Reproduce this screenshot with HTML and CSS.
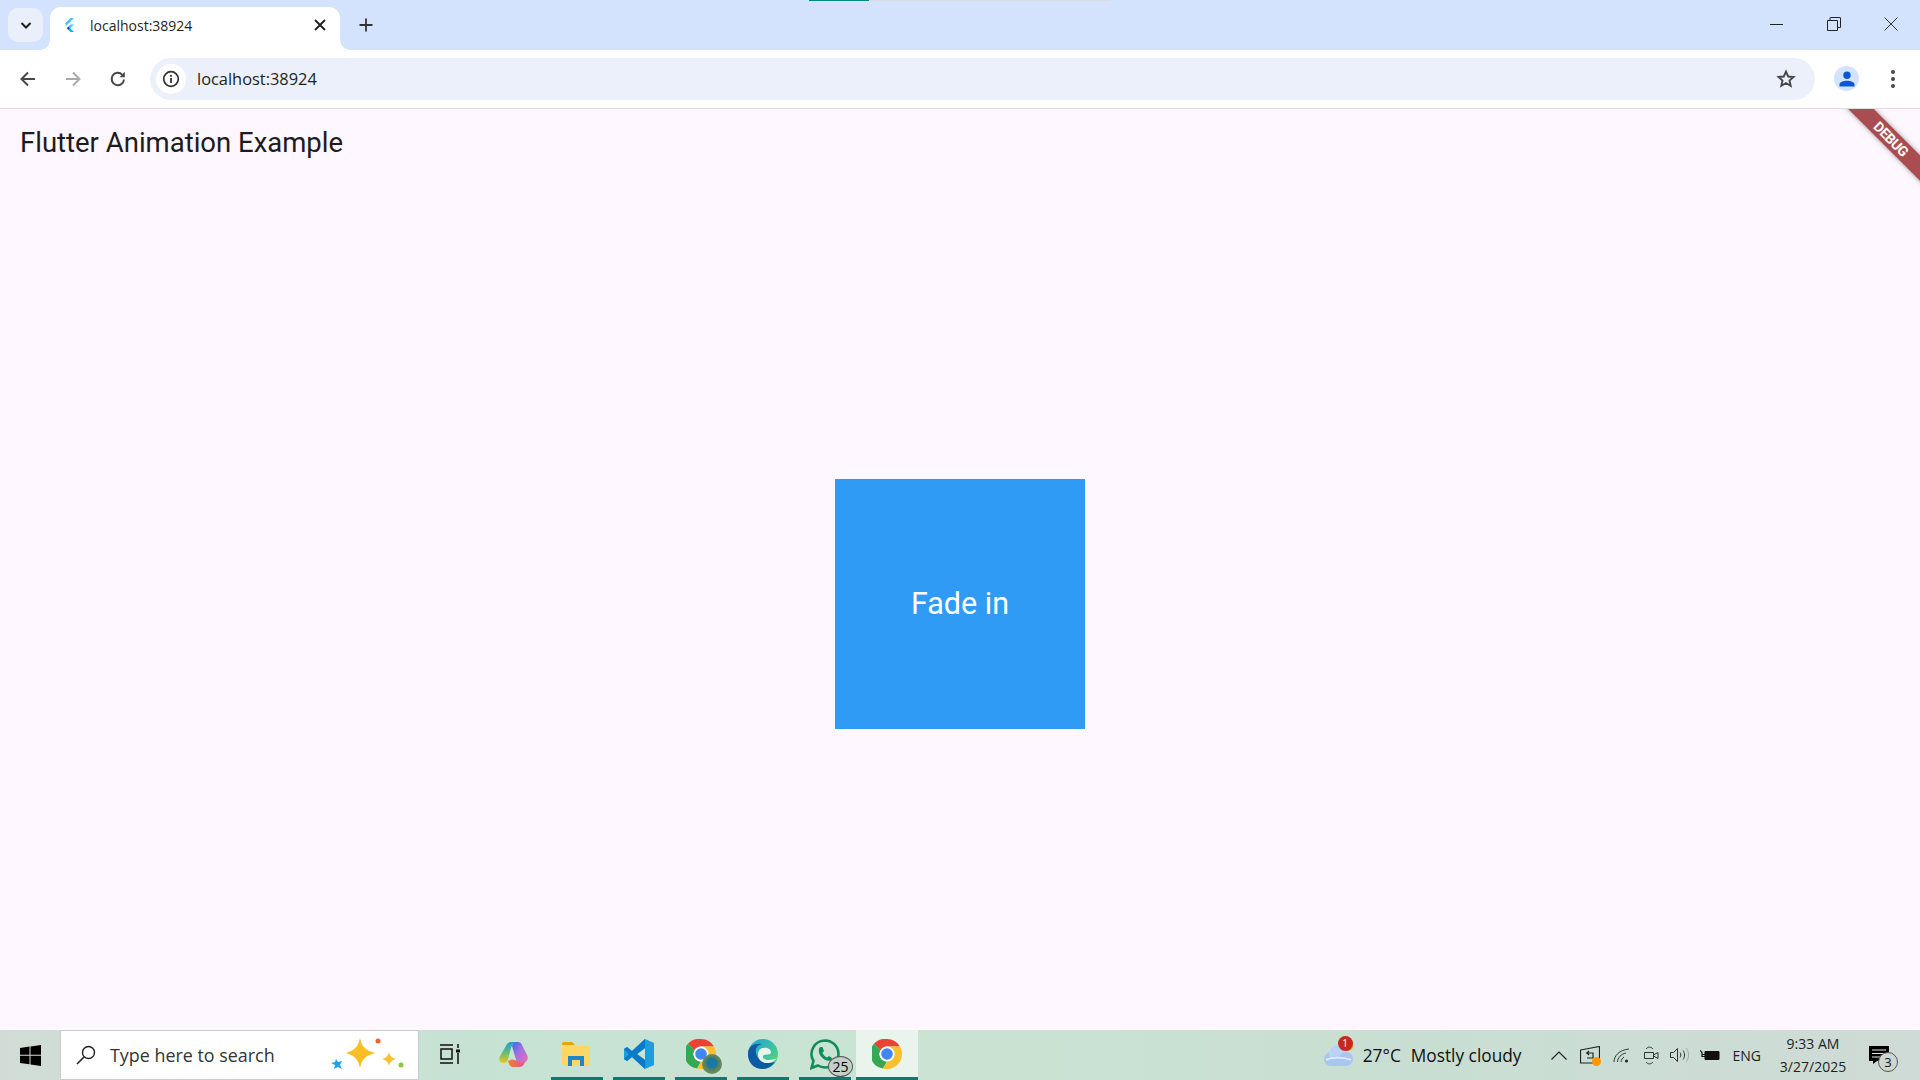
FILE: index.html
```html
<!DOCTYPE html>
<html>
<head>
<meta charset="UTF-8">
<title>localhost:38924</title>
<link rel="stylesheet" href="styles.css">
</head>
<body>
<div class="screen">

<div class="tabstrip">
    <div class="loadbar"><span class="loaddone"></span><span class="loadrest"></span></div>
    <div class="tabsearch">
        <svg width="16" height="16" viewBox="0 0 16 16"><path d="M3.500 6 8 10.500 12.500 6" fill="none" stroke="#1f1f1f" stroke-width="2"/></svg>
    </div>
    <div class="tab">
        <svg class="favicon" width="16" height="16" viewBox="0 0 16 16"><path d="M9.500 1 13 1 5.500 8.500 3.800 6.800Z" fill="#47c5fb"/><path d="M9.500 7.500 13 7.500 9.200 11.300 7.400 9.600Z" fill="#47c5fb"/><path d="M7.400 13 5.700 11.300 7.400 9.600 9.200 11.300Z" fill="#00569e"/><path d="M7.400 13 9.200 11.300 13 15 9.500 15Z" fill="#00b5f8"/></svg>
        <span class="tabtitle">localhost:38924</span>
        <svg class="tabclose" width="16" height="16" viewBox="0 0 16 16"><path d="M3 3 13 13M13 3 3 13" stroke="#1f1f1f" stroke-width="1.800"/></svg>
    </div>
    <svg class="newtab" width="16" height="16" viewBox="0 0 16 16"><path d="M8 1.500V14.500M1.500 8H14.500" stroke="#333" stroke-width="1.800"/></svg>
    <div class="winbtns">
        <svg width="14" height="14" viewBox="0 0 14 14"><path d="M0 7.500H13" stroke="#222" stroke-width="1"/></svg>
        <svg width="14" height="14" viewBox="0 0 14 14"><path d="M.5 3.500H10.500V13.500H.5ZM3 3.500V1A.5.5 0 0 1 3.500.5H13A.5.5 0 0 1 13.500 1V10.500H10.500" fill="none" stroke="#222" stroke-width="1"/></svg>
        <svg width="14" height="14" viewBox="0 0 14 14"><path d="M.5.500 13.500 13.500M13.500.5.500 13.500" stroke="#333" stroke-width="1"/></svg>
    </div>
</div>

<div class="toolbar">
    <svg class="navicon" width="20" height="20" viewBox="0 0 20 20"><path d="M17 10H4M10 3.500 3.500 10 10 16.500" fill="none" stroke="#474747" stroke-width="2"/></svg>
    <svg class="navicon" width="20" height="20" viewBox="0 0 20 20"><path d="M3 10H16M10 3.500 16.500 10 10 16.500" fill="none" stroke="#aaa" stroke-width="2"/></svg>
    <svg class="navicon" width="20" height="20" viewBox="0 0 20 20"><path d="M16 10.500A6.200 6.200 0 1 1 14.200 5.600" fill="none" stroke="#474747" stroke-width="2"/><path d="M16.800 2.800V8.200H11.400Z" fill="#474747"/></svg>
    <div class="omnibox">
        <div class="siteinfo">
            <svg width="18" height="18" viewBox="0 0 18 18"><circle cx="9" cy="9" r="7.300" fill="none" stroke="#333" stroke-width="1.700"/><path d="M9 8V13M9 5V6.700" stroke="#333" stroke-width="1.800"/></svg>
        </div>
        <span class="url">localhost:38924</span>
        <svg class="star" width="20" height="20" viewBox="0 0 20 20"><path d="M10 2.600 12.200 7.500 17.500 8 13.500 11.500 14.700 16.800 10 14 5.300 16.800 6.500 11.500 2.500 8 7.800 7.500Z" fill="none" stroke="#474747" stroke-width="1.900"/></svg>
    </div>
    <div class="avatar">
        <svg width="16" height="16" viewBox="0 0 16 16"><circle cx="8" cy="4.300" r="3.700" fill="#0b57d0"/><path d="M.5 15.500V13.500C.5 10.800 4.500 9.700 8 9.700S15.500 10.800 15.500 13.500V15.500Z" fill="#0b57d0"/></svg>
    </div>
    <div class="kebab"><i></i><i></i><i></i></div>
</div>

<div class="page">
    <div class="appbar">Flutter Animation Example</div>
    <div class="stage">
        <div class="fadebox">Fade in</div>
    </div>
    <div class="ribbon">DEBUG</div>
</div>

<div class="taskbar">
    <div class="startbtn">
        <svg width="21" height="21" viewBox="0 0 21 21"><path d="M0 3 9.500 1.500V9.800H0ZM10.500 1.400 21 0V9.800H10.500ZM0 10.800H9.500V19.200L0 18ZM10.500 10.800H21V21L10.500 19.400Z" fill="#000"/></svg>
    </div>
    <div class="searchbox">
        <svg class="searchicon" width="20" height="20" viewBox="0 0 20 20"><circle cx="12.500" cy="7.500" r="6" fill="none" stroke="#222" stroke-width="1.400"/><path d="M8 12 1 19" stroke="#222" stroke-width="1.600"/></svg>
        <span class="searchtext">Type here to search</span>
        <svg class="sparkles" width="80" height="34" viewBox="0 0 80 34"><path d="M30 0C32 9 35 12 45 15 35 18 32 21 30 30 28 21 25 18 16 15 25 12 28 9 30 0Z" fill="#fbbd24"/><path d="M59 14C60 18 62 20 66 21 62 22 60 24 59 28 58 24 56 22 52 21 56 20 58 18 59 14Z" fill="#fbc02d"/><path d="M6 21 8 24 12 23 10 27 12 31 8 29 4 31 5 27 1 25 5 24Z" fill="#1fa5f0"/><circle cx="48" cy="3" r="2.500" fill="#f4612a"/><circle cx="71" cy="27" r="2.500" fill="#8cc63f"/></svg>
    </div>
    <div class="taskslot">
        <svg class="taskview" width="21" height="20" viewBox="0 0 21 20"><path d="M1 1H14M1 19H14M2 5H13V15H2ZM19 0V4M19 9V20" fill="none" stroke="#111" stroke-width="1.500"/><rect x="17" y="5.500" width="4" height="3" fill="#111"/></svg>
    </div>
    <div class="taskslot">
        <svg class="copilot" width="29" height="25" viewBox="0 0 29 25"><defs><linearGradient id="cpa" x1="0" y1="0" x2="1" y2="1"><stop offset="0" stop-color="#2a6fdc"/><stop offset=".45" stop-color="#a36fe0"/><stop offset="1" stop-color="#ee6fb0"/></linearGradient><linearGradient id="cpb" x1="0" y1="0" x2="0" y2="1"><stop offset="0" stop-color="#1c9cd8"/><stop offset=".55" stop-color="#6cc070"/><stop offset="1" stop-color="#f5c518"/></linearGradient><linearGradient id="cpc" x1="0" y1="0" x2="1" y2="0"><stop offset="0" stop-color="#f08030"/><stop offset="1" stop-color="#e8508a"/></linearGradient></defs><path d="M15 0H19C21 0 22.500 1 23 3L28.500 14C29.500 18 27 21 23 21H18L13 4Z" fill="url(#cpa)"/><path d="M8 2C9 .5 11 0 13 0H17C14 1 13 3 12 6L9 17C8.500 20 7 21 4 21 1 21-.5 18 .5 15Z" fill="url(#cpb)"/><path d="M9 19C10 21 10.500 25 14 25H20C23 25 25 23 26 20 23 21 21 21 18 19 15 17 12 17 9 19Z" fill="url(#cpc)"/></svg>
    </div>
    <div class="taskslot running">
        <svg class="explorer" width="28" height="24" viewBox="0 0 28 24"><path d="M0 2A2 2 0 0 1 2 0H10L13 3H0Z" fill="#e0a800"/><path d="M0 4H26A2 2 0 0 1 28 6V22A2 2 0 0 1 26 24H2A2 2 0 0 1 0 22Z" fill="#fdd766"/><path d="M6 14H22V24H18V18H10V24H6Z" fill="#1f86c9"/></svg>
    </div>
    <div class="taskslot running">
        <svg width="30" height="30" viewBox="0 0 30 30"><path d="M21 0 30 4V26L21 30 8 18 3 22 0 20V10L3 8 8 12ZM21 9 13 15 21 21Z" fill="#1b9de2"/><path d="M21 0V9L13 15 21 21V30L8 18 3 22 0 20 5 15 0 10 3 8 8 12Z" fill="#0a7bc6"/></svg>
    </div>
    <div class="taskslot running">
        <div class="iconwrap">
            <svg width="30" height="30" viewBox="0 0 30 30"><use href="#chromelogo"/></svg>
            <div class="photobadge"></div>
        </div>
    </div>
    <div class="taskslot running">
        <svg width="30" height="30" viewBox="0 0 30 30"><defs><linearGradient id="edgea" x1="0" y1="0" x2="1" y2="1"><stop offset="0" stop-color="#1aa0dc"/><stop offset="1" stop-color="#5fdc70"/></linearGradient></defs><circle cx="15" cy="15" r="15" fill="url(#edgea)"/><path d="M0 15C0 6 8 4 14 5 9 6 7 10 8 14 9 20 15 24 22 24L27 23C24 27 20 30 15 30 6 30 0 24 0 15Z" fill="#0c59a4"/><path d="M10 15C10 10 15 8 19 9 23 10 24 14 22 15 19 16 16 15 15 17 14 20 18 21 22 21L27 20 29 19C26 23 22 24 19 24 13 24 10 20 10 15Z" fill="#e8f5ee"/></svg>
    </div>
    <div class="taskslot running">
        <div class="iconwrap">
            <svg width="30" height="31" viewBox="0 0 30 31"><path d="M15 1.500A13.500 13.500 0 0 1 15 28.500 14 14 0 0 1 8 26.500L1.500 29 3.500 22A13.500 13.500 0 0 1 15 1.500Z" fill="none" stroke="#128c5a" stroke-width="2.600"/><path d="M10 8 12.500 8 14 12 12.500 14C13.500 16 15 17.500 17 18.500L19 17 22 19 21.500 21C19 23 14 21 11.500 18 8.500 15 8 10 10 8Z" fill="#128c5a"/></svg>
            <div class="countbadge">25</div>
        </div>
    </div>
    <div class="taskslot active">
        <svg width="30" height="30" viewBox="0 0 30 30"><g id="chromelogo"><path d="M15 0A15 15 0 0 1 28 7.500H15A7.500 7.500 0 0 0 8.500 11.200L2 4.800A15 15 0 0 1 15 0Z" fill="#ea4335"/><path d="M2 4.800 8.500 11.200A7.500 7.500 0 0 0 15 22.500L11 29.500A15 15 0 0 1 2 4.800Z" fill="#34a853"/><path d="M28 7.500A15 15 0 0 1 11 29.500L15 22.500A7.500 7.500 0 0 0 21.500 11.200L15 7.500Z" fill="#fbc02d"/><circle cx="15" cy="15" r="7.500" fill="#fff"/><circle cx="15" cy="15" r="5.800" fill="#4285f4"/></g></svg>
    </div>
    <div class="tray">
        <div class="weather">
            <div class="iconwrap">
                <svg width="30" height="21" viewBox="0 0 30 21"><circle cx="8" cy="14" r="7" fill="#a9c6f2"/><circle cx="15" cy="9" r="9" fill="#bcd2f5"/><circle cx="23" cy="14" r="7" fill="#a9c6f2"/><rect x="8" y="13" width="15" height="8" fill="#a9c6f2"/><path d="M3 15C9 12 21 12 28 15" fill="none" stroke="#e5efff" stroke-width="1.500"/></svg>
                <div class="sunbit"></div>
                <div class="alertbadge">1</div>
            </div>
            <span>27°C</span>
            <span>Mostly cloudy</span>
        </div>
        <svg class="trayicon" width="16" height="9" viewBox="0 0 16 9"><path d="M.5 8.500 8 1 15.500 8.500" fill="none" stroke="#222" stroke-width="1.200"/></svg>
        <div class="iconwrap trayicon">
            <svg width="20" height="18" viewBox="0 0 20 18"><path d="M.5 4 19.500.5V17H.5ZM6 7H13V12H7M9 5 7 7 9 9" fill="none" stroke="#222" stroke-width="1.200"/></svg>
            <div class="updatedot"></div>
        </div>
        <svg class="trayicon wifi" width="17" height="15" viewBox="0 0 17 15"><path d="M1 14C1 8 6 2 16 1M4.500 14C4.500 10 8 6 13 5M8 14C8 12 9.500 10 11 9" fill="none" stroke="#333" stroke-width="1"/><circle cx="13.500" cy="13" r="1.500" fill="#222"/></svg>
        <svg class="trayicon meet" width="15" height="19" viewBox="0 0 15 19"><path d="M.5 6.500H9.500V12.500H.5ZM9.500 9 14 6.500V12.500L9.500 10M2 3C4 .5 7 .5 9 3M2 16C4 18.500 7 18.500 9 16" fill="none" stroke="#333" stroke-width="1"/></svg>
        <svg class="trayicon volume" width="20" height="16" viewBox="0 0 20 16"><path d="M.5 5.500H3.500L7.500 1.500V14.500L3.500 10.500H.5ZM10 5.500C11 7 11 9 10 10.500M13 3.500C15 6 15 10 13 12.500" fill="none" stroke="#333" stroke-width="1"/><path d="M16 1C19.500 5 19.500 11 16 15" fill="none" stroke="#aaa" stroke-width="1"/></svg>
        <svg width="20" height="12" viewBox="0 0 20 12"><path d="M5 2.500H19V10.500H5Z" fill="#111" stroke="#111"/><path d="M0 1.500 2 3.500V7.500H5M2 5.500H5" fill="none" stroke="#111" stroke-width="1.200"/></svg>
        <span class="lang">ENG</span>
        <div class="clock"><span>9:33 AM</span><span>3/27/2025</span></div>
        <div class="iconwrap">
            <svg width="21" height="18" viewBox="0 0 21 18"><path d="M0 0H20V15H8L4 18V15H0Z" fill="#000"/><path d="M3 4H17M3 7.500H17M3 11H14" stroke="#e5e5e5" stroke-width="1"/></svg>
            <div class="notebadge">3</div>
        </div>
    </div>
</div>

</div>
</body>
</html>
```

FILE: styles.css
```css
* {
  box-sizing: border-box;
}

body {
  margin: 0;
  font-family: "Open Sans", "Noto Sans", sans-serif;
}

svg {
  display: block;
}

.screen {
  display: flex;
  flex-direction: column;
  width: 1920px;
  height: 1080px;
  overflow: hidden;
}

/* chrome tabs */
.tabstrip {
  position: relative;
  display: flex;
  align-items: flex-end;
  height: 50px;
  padding-left: 8px;
  background: #d3e3fd;
}

.loadbar {
  position: absolute;
  top: 0;
  left: 809px;
  display: flex;
  height: 1px;
}

.loaddone {
  width: 60px;
  background: #00897b;
}

.loadrest {
  width: 241px;
  background: #dcdcdc;
}

.tabsearch {
  display: flex;
  align-items: center;
  justify-content: center;
  width: 35px;
  height: 34px;
  margin-bottom: 8px;
  border-radius: 10px;
  background: #e9f0fc;
}

.tab {
  position: relative;
  display: flex;
  align-items: center;
  width: 290px;
  height: 43px;
  margin-left: 7px;
  padding: 0 12px 7px 13px;
  border-radius: 11px 11px 0 0;
  background: #fff;
}

.tab::before,
.tab::after {
  content: "";
  position: absolute;
  bottom: 0;
  width: 10px;
  height: 10px;
}

.tab::before {
  left: -10px;
  background: radial-gradient(circle at 0 0, #d3e3fd 9.500px, #fff 10px);
}

.tab::after {
  right: -10px;
  background: radial-gradient(circle at 100% 0, #d3e3fd 9.500px, #fff 10px);
}

.favicon {
  margin-left: -2px;
}

.tabtitle {
  flex: 1;
  margin-left: 13px;
  font-size: 14px;
  color: #1f1f1f;
}

.newtab {
  margin: 0 0 17px 18px;
}

.winbtns {
  display: flex;
  gap: 43px;
  margin: 0 22px 19px auto;
}

/* address bar */
.toolbar {
  display: flex;
  align-items: center;
  height: 59px;
  padding: 0 20px 1px 18px;
  border-bottom: 1px solid #dedede;
  border-radius: 10px 10px 0 0;
  background: #fff;
}

.navicon {
  margin-right: 25px;
}

.omnibox {
  display: flex;
  align-items: center;
  width: 1665px;
  height: 42px;
  margin-left: -3px;
  padding: 0 19px 0 6px;
  border-radius: 21px;
  background: #ebf0fa;
}

.siteinfo {
  display: flex;
  align-items: center;
  justify-content: center;
  width: 30px;
  height: 30px;
  border-radius: 50%;
  background: #fff;
}

.url {
  flex: 1;
  margin-left: 11px;
  font-size: 16.400px;
  color: #1f1f1f;
}

.avatar {
  display: flex;
  align-items: center;
  justify-content: center;
  width: 25px;
  height: 25px;
  margin-left: 19px;
  border-radius: 50%;
  background: #d3e3fd;
}

.kebab {
  display: flex;
  flex-direction: column;
  gap: 3px;
  margin-left: 32px;
}

.kebab i {
  width: 4px;
  height: 4px;
  border-radius: 50%;
  background: #474747;
}

/* flutter app */
.page {
  position: relative;
  display: flex;
  flex: 1;
  flex-direction: column;
  overflow: hidden;
  background: #fef7ff;
  font-family: Roboto, sans-serif;
}

.appbar {
  height: 68px;
  padding: 16px 20px 0;
  font-size: 27.500px;
  line-height: 36px;
  color: #1d1b20;
}

.stage {
  display: flex;
  flex: 1;
  align-items: center;
  justify-content: center;
}

.fadebox {
  display: flex;
  align-items: center;
  justify-content: center;
  width: 250px;
  height: 250px;
  background: #2f9bf5;
  font-size: 30.500px;
  color: #fff;
}

.ribbon {
  position: absolute;
  top: 21px;
  right: -36px;
  width: 130px;
  height: 18px;
  transform: rotate(45deg);
  background: #a94d50;
  box-shadow: 0 0 5px rgba(0, 0, 0, 0.4);
  font-size: 14px;
  font-weight: 700;
  line-height: 18px;
  letter-spacing: -0.5px;
  text-align: center;
  color: #fff;
}

/* windows taskbar */
.taskbar {
  display: flex;
  height: 50px;
  background: linear-gradient(90deg, #d1dcd7 0%, #c6e2d3 25%, #cae4d3 45%, #c8dfd2 70%, #cfdbd6 100%);
}

.startbtn {
  display: flex;
  align-items: center;
  justify-content: center;
  width: 60px;
}

.searchbox {
  display: flex;
  align-items: center;
  width: 359px;
  padding-left: 15px;
  border: 1px solid #ccc;
  background: #fff;
}

.searchicon {
  flex: none;
}

.searchtext {
  flex: 1;
  margin-left: 14px;
  font-size: 17.900px;
  color: #333;
}

.sparkles {
  margin-right: 8px;
}

.taskslot {
  position: relative;
  display: flex;
  align-items: center;
  justify-content: center;
  width: 62px;
  padding-bottom: 2px;
}

.taskslot:nth-of-type(3) {
  margin-left: 3px;
}

.taskview {
  margin-right: 8px;
}

.copilot {
  margin-right: 4px;
}

.explorer {
  margin-right: 2px;
}

.running::after {
  content: "";
  position: absolute;
  bottom: 0;
  left: 5px;
  right: 5px;
  height: 3px;
  background: #077e6c;
}

.active {
  background: #e8f4ec;
}

.active::after {
  content: "";
  position: absolute;
  bottom: 0;
  left: 0;
  right: 0;
  height: 3px;
  background: #077e6c;
}

.iconwrap {
  position: relative;
}

.photobadge {
  position: absolute;
  right: -6px;
  bottom: -5px;
  width: 20px;
  height: 20px;
  border-radius: 50%;
  background: radial-gradient(circle at 50% 45%, #1a78a8 0 5px, #4f7f5a 6px, #6a8a60 10px);
}

.countbadge {
  position: absolute;
  right: -13px;
  bottom: -7px;
  width: 25px;
  height: 21px;
  border: 1px solid #555;
  border-radius: 50%;
  background: #c3cfc8;
  font-size: 14px;
  line-height: 19px;
  text-align: center;
  color: #000;
}

.tray {
  display: flex;
  flex: 1;
  align-items: center;
  justify-content: flex-end;
  gap: 13px;
  padding-right: 30px;
  color: #111;
}

.trayicon.wifi {
  margin-right: 1px;
}

.trayicon.meet {
  margin-right: -2px;
}

.trayicon.volume {
  margin-right: -3px;
}

.weather {
  display: flex;
  align-items: center;
  gap: 10px;
  margin-right: 16px;
  font-size: 17.300px;
}

.sunbit {
  position: absolute;
  top: -4px;
  right: 0;
  width: 10px;
  height: 10px;
  border-radius: 50%;
  background: #f09a1a;
}

.alertbadge {
  position: absolute;
  top: -9px;
  right: 0;
  width: 15px;
  height: 15px;
  border-radius: 50%;
  background: #c42b1c;
  font-size: 10px;
  line-height: 15px;
  text-align: center;
  color: #fff;
}

.updatedot {
  position: absolute;
  right: -1px;
  bottom: -2px;
  width: 9px;
  height: 9px;
  border-radius: 50%;
  background: #ff9800;
}

.lang {
  font-size: 14px;
  color: #222;
}

.clock {
  display: flex;
  flex-direction: column;
  align-items: center;
  width: 86px;
  margin-left: -4px;
  font-size: 14px;
  line-height: 23px;
  color: #222;
}

.notebadge {
  position: absolute;
  right: -8px;
  bottom: -8px;
  width: 20px;
  height: 20px;
  border: 1px solid #555;
  border-radius: 50%;
  background: #cdd6d1;
  font-size: 13px;
  line-height: 18px;
  text-align: center;
  color: #111;
}
```
